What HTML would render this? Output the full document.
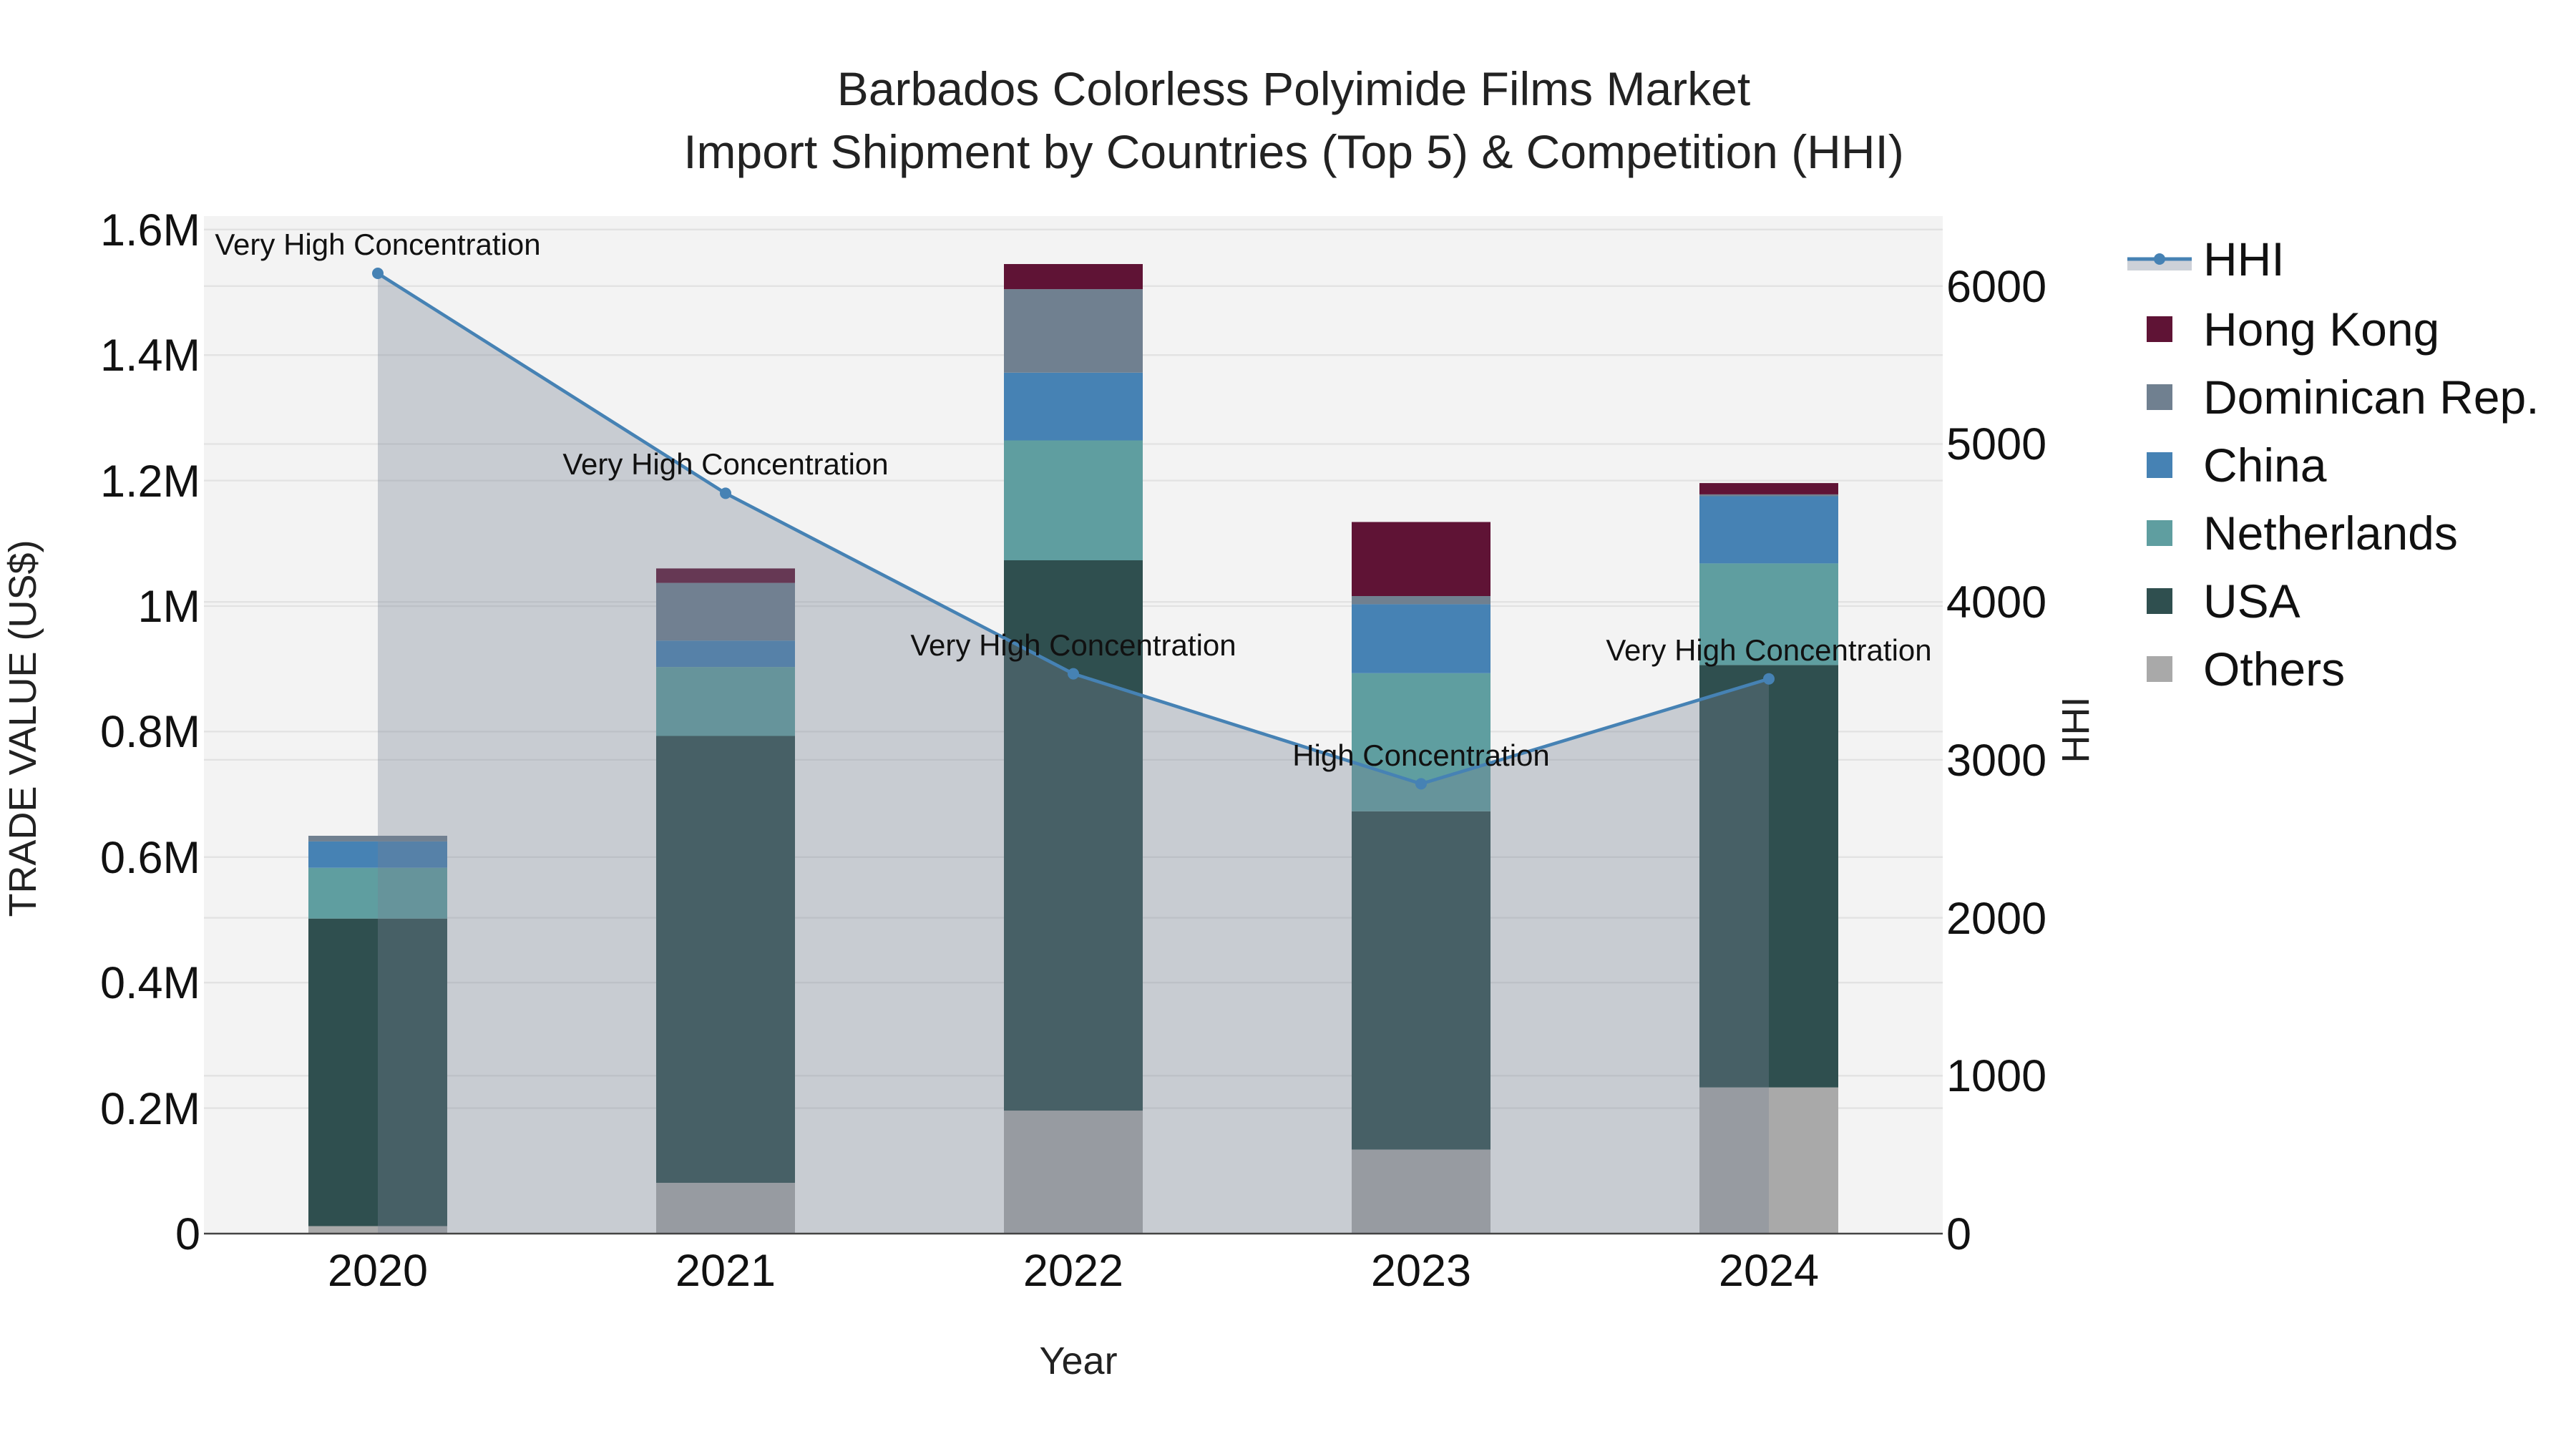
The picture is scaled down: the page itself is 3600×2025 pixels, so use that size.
<!DOCTYPE html>
<html><head><meta charset="utf-8"><style>
html,body{margin:0;padding:0;background:#fff;}
svg{display:block;font-family:"Liberation Sans",Arial,sans-serif;}
</style></head><body>
<svg width="3600" height="2025" viewBox="0 0 3600 2025" xmlns="http://www.w3.org/2000/svg">
<rect x="0" y="0" width="3600" height="2025" fill="#fff"/>
<rect x="285" y="302" width="2430" height="1422" fill="#f3f3f3"/>
<g stroke="#e2e2e2" stroke-width="2.3">
<line x1="285" x2="2715" y1="1548.6" y2="1548.6"/><line x1="285" x2="2715" y1="1373.2" y2="1373.2"/>
<line x1="285" x2="2715" y1="1197.8" y2="1197.8"/><line x1="285" x2="2715" y1="1022.4" y2="1022.4"/>
<line x1="285" x2="2715" y1="847" y2="847"/><line x1="285" x2="2715" y1="671.6" y2="671.6"/>
<line x1="285" x2="2715" y1="496.2" y2="496.2"/><line x1="285" x2="2715" y1="320.8" y2="320.8"/>
<line x1="285" x2="2715" y1="1503.3" y2="1503.3"/><line x1="285" x2="2715" y1="1282.6" y2="1282.6"/>
<line x1="285" x2="2715" y1="1061.9" y2="1061.9"/><line x1="285" x2="2715" y1="841.2" y2="841.2"/>
<line x1="285" x2="2715" y1="620.5" y2="620.5"/><line x1="285" x2="2715" y1="399.8" y2="399.8"/>
</g>
<!-- 2020 -->
<rect x="431" width="194" y="1713.5" height="10.5" fill="#a9a9a9"/>
<rect x="431" width="194" y="1283.7" height="429.8" fill="#2f4f4f"/>
<rect x="431" width="194" y="1212.7" height="71" fill="#5f9ea0"/>
<rect x="431" width="194" y="1175.9" height="36.8" fill="#4682b4"/>
<rect x="431" width="194" y="1168" height="7.9" fill="#708090"/>
<!-- 2021 -->
<rect x="917" width="194" y="1653" height="71" fill="#a9a9a9"/>
<rect x="917" width="194" y="1028.5" height="624.5" fill="#2f4f4f"/>
<rect x="917" width="194" y="932.1" height="96.4" fill="#5f9ea0"/>
<rect x="917" width="194" y="895.2" height="36.9" fill="#4682b4"/>
<rect x="917" width="194" y="814.6" height="80.6" fill="#708090"/>
<rect x="917" width="194" y="794.4" height="20.2" fill="#5f1335"/>
<!-- 2022 -->
<rect x="1403" width="194" y="1552.1" height="171.9" fill="#a9a9a9"/>
<rect x="1403" width="194" y="783" height="769.1" fill="#2f4f4f"/>
<rect x="1403" width="194" y="615.5" height="167.5" fill="#5f9ea0"/>
<rect x="1403" width="194" y="520.8" height="94.7" fill="#4682b4"/>
<rect x="1403" width="194" y="404.1" height="116.7" fill="#708090"/>
<rect x="1403" width="194" y="369" height="35.1" fill="#5f1335"/>
<!-- 2023 -->
<rect x="1889" width="194" y="1606.5" height="117.5" fill="#a9a9a9"/>
<rect x="1889" width="194" y="1133.8" height="472.7" fill="#2f4f4f"/>
<rect x="1889" width="194" y="940.8" height="193" fill="#5f9ea0"/>
<rect x="1889" width="194" y="844.4" height="96.4" fill="#4682b4"/>
<rect x="1889" width="194" y="833" height="11.4" fill="#708090"/>
<rect x="1889" width="194" y="729.5" height="103.5" fill="#5f1335"/>
<!-- 2024 -->
<rect x="2375" width="194" y="1519.7" height="204.3" fill="#a9a9a9"/>
<rect x="2375" width="194" y="929.4" height="590.3" fill="#2f4f4f"/>
<rect x="2375" width="194" y="787.4" height="142" fill="#5f9ea0"/>
<rect x="2375" width="194" y="693.5" height="93.9" fill="#4682b4"/>
<rect x="2375" width="194" y="690.9" height="2.6" fill="#708090"/>
<rect x="2375" width="194" y="675.1" height="15.8" fill="#5f1335"/>
<!-- HHI area -->
<polygon points="528,382 1014,689.4 1500,941.6 1986,1095.4 2472,948.7 2472,1724 528,1724" fill="rgb(118,128,148)" fill-opacity="0.34"/>
<polyline points="528,382 1014,689.4 1500,941.6 1986,1095.4 2472,948.7" fill="none" stroke="#4682b4" stroke-width="4.6"/>
<g fill="#4682b4"><circle cx="528" cy="382" r="8"/><circle cx="1014" cy="689.4" r="8"/><circle cx="1500" cy="941.6" r="8"/><circle cx="1986" cy="1095.4" r="8"/><circle cx="2472" cy="948.7" r="8"/></g>
<line x1="285" x2="2715" y1="1724" y2="1724" stroke="#444" stroke-width="2.5"/>
<g font-size="42" fill="#111" text-anchor="middle">
<text x="528" y="356">Very High Concentration</text>
<text x="1014" y="663">Very High Concentration</text>
<text x="1500" y="916">Very High Concentration</text>
<text x="1986" y="1070">High Concentration</text>
<text x="2472" y="923">Very High Concentration</text>
</g>
<g font-size="63" fill="#111" text-anchor="end">
<text x="280" y="1746">0</text><text x="280" y="1571">0.2M</text><text x="280" y="1395">0.4M</text>
<text x="280" y="1220">0.6M</text><text x="280" y="1044">0.8M</text><text x="280" y="869">1M</text>
<text x="280" y="694">1.2M</text><text x="280" y="518">1.4M</text><text x="280" y="343">1.6M</text>
</g>
<g font-size="63" fill="#111">
<text x="2720" y="1746">0</text><text x="2720" y="1525">1000</text><text x="2720" y="1305">2000</text>
<text x="2720" y="1084">3000</text><text x="2720" y="863">4000</text><text x="2720" y="642">5000</text><text x="2720" y="422">6000</text>
</g>
<g font-size="63" fill="#111" text-anchor="middle">
<text x="528" y="1797">2020</text><text x="1014" y="1797">2021</text><text x="1500" y="1797">2022</text><text x="1986" y="1797">2023</text><text x="2472" y="1797">2024</text>
</g>
<text x="1507" y="1920" font-size="54" fill="#222" text-anchor="middle">Year</text>
<text transform="translate(50,1018) rotate(-90)" font-size="54" fill="#222" text-anchor="middle">TRADE VALUE (US$)</text>
<text transform="translate(2919,1020) rotate(-90)" font-size="54" fill="#222" text-anchor="middle">HHI</text>
<text x="1808" y="147" font-size="66" fill="#222" text-anchor="middle">Barbados Colorless Polyimide Films Market</text>
<text x="1808" y="235" font-size="66" fill="#222" text-anchor="middle">Import Shipment by Countries (Top 5) &amp; Competition (HHI)</text>
<!-- legend -->
<rect x="2973" y="362" width="90" height="16" fill="#cdd1d8"/>
<line x1="2973" x2="3063" y1="362" y2="362" stroke="#4682b4" stroke-width="5"/>
<circle cx="3018" cy="362" r="8" fill="#4682b4"/>
<rect x="3000" y="442" width="36" height="36" fill="#5f1335"/>
<rect x="3000" y="537" width="36" height="36" fill="#708090"/>
<rect x="3000" y="632" width="36" height="36" fill="#4682b4"/>
<rect x="3000" y="727" width="36" height="36" fill="#5f9ea0"/>
<rect x="3000" y="822" width="36" height="36" fill="#2f4f4f"/>
<rect x="3000" y="917" width="36" height="36" fill="#a9a9a9"/>
<g font-size="66" fill="#111">
<text x="3079" y="385">HHI</text>
<text x="3079" y="483">Hong Kong</text>
<text x="3079" y="578">Dominican Rep.</text>
<text x="3079" y="673">China</text>
<text x="3079" y="768">Netherlands</text>
<text x="3079" y="863">USA</text>
<text x="3079" y="958">Others</text>
</g>
</svg>
</body></html>
